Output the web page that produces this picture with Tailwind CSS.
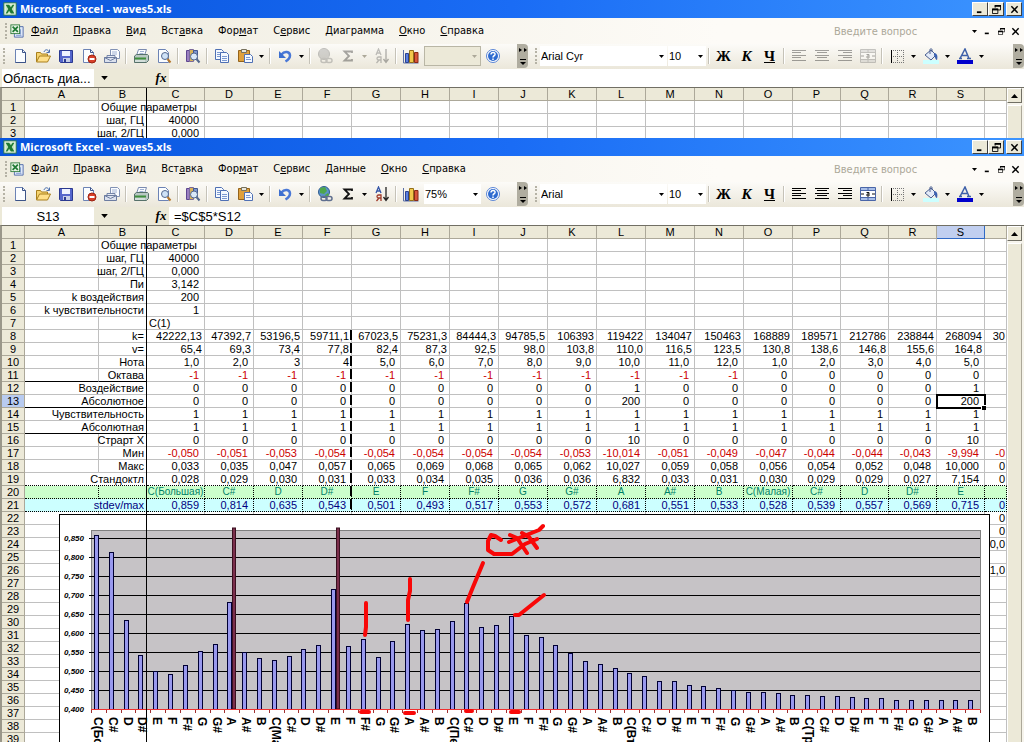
<!DOCTYPE html>
<html lang="ru">
  <head>
    <meta charset="UTF-8" />
    <meta name="viewport" content="width=device-width, initial-scale=1.0" />
    <title>Microsoft Excel - waves5.xls</title>
    <script src="https://cdn.jsdelivr.net/npm/@tailwindcss/browser@4"></script>
  </head>
  <body class="flex h-screen flex-col overflow-hidden bg-[#ece9d8] font-['Liberation_Sans',Arial,sans-serif] text-[11px] text-black">
    <!-- icons -->
    <svg class="hidden">
      <symbol id="i-excel" viewBox="0 0 16 16">
        <rect x="1" y="1" width="14" height="14" fill="#e9f5e6" stroke="#2d7a3a" />
        <path d="M3 3h10v10H3z" fill="#c5e4c2" />
        <path d="M3 3h4l2 3 2-3h2l-3 5 3 5h-4l-2-3-2 3H3l3-5z" fill="#1f7a33" />
      </symbol>
      <symbol id="i-book" viewBox="0 0 16 16">
        <path d="M5 3h10v12H5z" fill="#dfe8f8" stroke="#4a66a8" />
        <path d="M12 6v6M7 13h6" stroke="#7b96cf" />
        <rect x="1" y="1" width="10" height="10" fill="#e9f5e6" stroke="#2d7a3a" />
        <path d="M3 3l6 6M9 3L3 9" stroke="#1f7a33" stroke-width="2" />
      </symbol>
      <symbol id="i-new" viewBox="0 0 16 16">
        <path d="M3.500 1.500h7l3 3v10h-10z" fill="#fbfdff" stroke="#6c83b5" />
        <path d="M10.500 1.500v3h3M13.500 4.500v10h-10" fill="none" stroke="#3c5488" />
      </symbol>
      <symbol id="i-open" viewBox="0 0 16 16">
        <path d="M1.500 13.500v-9h4l1 1.500h6v2" fill="#f6d470" stroke="#a87f1c" />
        <path d="M1.500 14l3-6h11l-3 6z" fill="#ffe08a" stroke="#a87f1c" />
        <path d="M9 4c1-3 4-3 5 0M14.500 1.500v3h-3" fill="none" stroke="#4a6fae" />
      </symbol>
      <symbol id="i-save" viewBox="0 0 16 16">
        <path d="M1.500 2.500h13v12h-12l-1-1z" fill="#5566cc" stroke="#2b3990" />
        <path d="M4 3h8v5H4z" fill="#eef2ff" />
        <path d="M5 10h7v4H5z" fill="#c7cfe8" />
        <path d="M6 11h2v3H6z" fill="#2b3990" />
      </symbol>
      <symbol id="i-perm" viewBox="0 0 16 16">
        <path d="M2.500 1.500h7l3 3v10h-10z" fill="#fbfdff" stroke="#6c83b5" />
        <path d="M9.500 1.500v3h3" fill="none" stroke="#3c5488" />
        <circle cx="11" cy="11" r="4" fill="#d8402a" stroke="#9c2412" />
        <path d="M8.500 11h5" stroke="#fff" stroke-width="2" />
      </symbol>
      <symbol id="i-mail" viewBox="0 0 16 16">
        <path d="M6.500 1.500h7l2 2v7h-9z" fill="#fafcff" stroke="#8292b5" />
        <path d="M8 4h5M8 6h5" stroke="#9fb0d2" />
        <path d="M3 7.500h8v3H3z" fill="#e6ebf5" stroke="#7484a8" />
        <path d="M.5 9.500h12v5H.5z" fill="#dbe1ee" stroke="#6c7ca0" />
        <path d="M.5 9.500l6 3 6-3" fill="none" stroke="#6c7ca0" />
      </symbol>
      <symbol id="i-print" viewBox="0 0 16 16">
        <path d="M5.500 1.500h8l-2 6h-8z" fill="#fafcff" stroke="#7b8bb0" />
        <path d="M7 3.500h4M6.500 5.500h4" stroke="#9fb0d2" />
        <path d="M1.500 8l2-1.500h11l1 1v5l-2 2h-12z" fill="#b9c8c4" stroke="#56716a" />
        <path d="M2 10.500h11" stroke="#3f8f3c" stroke-width="2" />
        <path d="M2 13h10" stroke="#eef4f2" />
      </symbol>
      <symbol id="i-preview" viewBox="0 0 16 16">
        <path d="M2.500 1.500h7l3 3v10h-10z" fill="#fbfdff" stroke="#6c83b5" />
        <circle cx="9" cy="8" r="3.500" fill="#cfe2f7" stroke="#54688e" />
        <path d="M11.500 11l3 3.500" stroke="#b5762a" stroke-width="2" />
      </symbol>
      <symbol id="i-research" viewBox="0 0 16 16">
        <path d="M1.500 2.500h3v11h-3z" fill="#9a7fc0" stroke="#5e4690" />
        <path d="M4.500 1.500h4v12h-4z" fill="#d8b25a" stroke="#7b6a9c" />
        <path d="M8.500 2.500h4v8h-4z" fill="#7f97cf" stroke="#44598f" />
        <circle cx="9" cy="8.500" r="3.500" fill="#d9e8f8" stroke="#54688e" />
        <path d="M11.500 11l3 3.500" stroke="#54688e" stroke-width="2" />
      </symbol>
      <symbol id="i-copy" viewBox="0 0 16 16">
        <path d="M1.500 1.500h6l2 2v8h-8z" fill="#f5f9ff" stroke="#4f70b4" />
        <path d="M3 4.500h4M3 6.500h4M3 8.500h3" stroke="#7b99d2" />
        <path d="M6.500 4.500h6l2 2v8h-8z" fill="#f5f9ff" stroke="#4f70b4" />
        <path d="M8 8.500h5M8 10.500h5M8 12.500h5" stroke="#7b99d2" />
      </symbol>
      <symbol id="i-paste" viewBox="0 0 16 16">
        <path d="M1.500 2.500h11v11h-11z" fill="#dfa03c" stroke="#94631a" />
        <path d="M4.500 1.500h5v3h-5z" fill="#e8e6dc" stroke="#77715c" />
        <path d="M7.500 6.500h6l2 2v6h-8z" fill="#f5f9ff" stroke="#4f70b4" />
        <path d="M9 9.500h4M9 11.500h5" stroke="#7b99d2" />
      </symbol>
      <symbol id="i-undo" viewBox="0 0 16 16">
        <path d="M4.500 6.500c3-4 8.500-3 8.500 1 0 3-2 4.500-4.500 6" fill="none" stroke="#4a78d6" stroke-width="2.500" />
        <path d="M2 3v7h7z" fill="#3d6fd0" />
      </symbol>
      <symbol id="i-link" viewBox="0 0 16 16">
        <circle cx="7" cy="6" r="5.500" fill="#5a93c9" stroke="#2f5c8f" />
        <path d="M3 2l5-1 2 4-3 3-4-1zM8 9l3-2 1 2-3 2z" fill="#4ea64b" />
        <rect x="4" y="10.500" width="6" height="4" rx="2" fill="none" stroke="#5f6f8f" stroke-width="1.500" />
        <rect x="9" y="10.500" width="6" height="4" rx="2" fill="none" stroke="#5f6f8f" stroke-width="1.500" />
      </symbol>
      <symbol id="i-sum" viewBox="0 0 16 16">
        <path d="M12 5V3.500H4.500L9 8l-4.500 4.500H12V11" fill="none" stroke="#111" stroke-width="1.800" />
      </symbol>
      <symbol id="i-sort" viewBox="0 0 16 16">
        <path d="M2 7l2.500-6L7 7M3 5h3" fill="none" stroke="#3455a8" stroke-width="1.300" />
        <path d="M7 15V9H4.500a1.500 1.500 0 000 3H7M5 12l-2.500 3" fill="none" stroke="#a03a2a" stroke-width="1.300" />
        <path d="M12 1v12M9.500 11l2.500 3.500 2.500-3.500" fill="none" stroke="#222" stroke-width="1.300" />
      </symbol>
      <symbol id="i-chart" viewBox="0 0 16 16">
        <path d="M.5 2v13h15" fill="none" stroke="#5a6fa8" />
        <path d="M2.500 5.500h3v9h-3z" fill="#5b7fe0" stroke="#2c438f" />
        <path d="M6.500 2.500h4v12h-4z" fill="#f2c84c" stroke="#94701a" />
        <path d="M11.500 4.500h3.500v10h-3.500z" fill="#d8553a" stroke="#8a2a16" />
      </symbol>
      <symbol id="i-help" viewBox="0 0 16 16">
        <circle cx="8" cy="8" r="6.500" fill="#fff" stroke="#5b86d6" />
        <circle cx="8" cy="8" r="5" fill="#2f6bd0" />
        <path d="M6 6.500c0-3 4.500-2.500 4 0C9.500 8 8 8 8 9.500M8 10.500v1.500" fill="none" stroke="#fff" stroke-width="1.500" />
      </symbol>
      <symbol id="i-left" viewBox="0 0 16 16"><path d="M1 2.500h14M1 4.500h9M1 7.500h14M1 9.500h9M1 12.500h14" stroke="#000" /></symbol>
      <symbol id="i-center" viewBox="0 0 16 16"><path d="M1 2.500h14M3 4.500h10M1 7.500h14M3 9.500h10M1 12.500h14" stroke="#000" /></symbol>
      <symbol id="i-right" viewBox="0 0 16 16"><path d="M1 2.500h14M6 4.500h9M1 7.500h14M6 9.500h9M1 12.500h14" stroke="#000" /></symbol>
      <symbol id="i-merge" viewBox="0 0 16 16">
        <path d="M.5 1.500h15v13H.5z" fill="#a9bfe8" stroke="#4a66a8" />
        <path d="M1 5h14v6H1z" fill="#fff" />
        <path d="M.5 4.500h15M.5 11.500h15M8 1.500v3M8 11.500v3" stroke="#4a66a8" />
        <path d="M1 8h3M12 8h3M6.500 6.500h2.500v3.500H7V8h2" fill="none" stroke="#111" />
      </symbol>
      <symbol id="i-border" viewBox="0 0 16 16">
        <path d="M2.500 2v13" stroke="#000" />
        <path d="M4 2.500h11M4 8.500h11M4 14.500h11M8.500 2v13M14.500 2v13" stroke="#777" stroke-dasharray="1 1" />
      </symbol>
      <symbol id="i-fill" viewBox="0 0 16 16">
        <path d="M0 12h16v4H0z" fill="#ccffff" />
        <path d="M2 7l6-5 5 5-5 5z" fill="#e4ebf8" stroke="#4a5f90" />
        <path d="M7 6V1.500c0-1 2-1 2 0V4" fill="none" stroke="#4a5f90" />
        <path d="M11 5c3 0 4 3 3 7-1 0-2-2-3-5z" fill="#3d62b0" />
      </symbol>
      <symbol id="i-color" viewBox="0 0 16 16">
        <path d="M0 12h16v4H0z" fill="#0000cc" />
        <path d="M3 10.500L8 1l4 9.500M5 7.500h5M2 10.500h3M10 10.500h4" fill="none" stroke="#3d5fa8" stroke-width="1.500" />
      </symbol>
      <symbol id="i-down" viewBox="0 0 5 3"><path d="M0 0h5L2.500 3z" fill="currentColor" /></symbol>
      <symbol id="i-up" viewBox="0 0 7 4"><path d="M0 4h7L3.500 0z" /></symbol>
      <symbol id="i-more" viewBox="0 0 11 24">
        <path d="M2 4l3 2-3 2zM7 4l3 2-3 2z" />
        <path d="M3 15.500h6" stroke="#000" />
        <path d="M3 18h6l-3 3z" />
      </symbol>
      <symbol id="i-min" viewBox="0 0 10 10"><path d="M1 8h5" stroke="#000" stroke-width="2" /></symbol>
      <symbol id="i-restore" viewBox="0 0 10 10">
        <path d="M3.500 3V.5h6v5H7" fill="none" stroke="#000" />
        <path d="M3 1h7" stroke="#000" stroke-width="2" />
        <path d="M.5 4.500h6v5h-6z" fill="none" stroke="#000" />
        <path d="M0 5h7" stroke="#000" stroke-width="2" />
      </symbol>
      <symbol id="i-close" viewBox="0 0 10 10"><path d="M1.500 1.500l7 7M8.500 1.500l-7 7" stroke="#000" stroke-width="1.600" /></symbol>
    </svg>

    <main id="app" class="flex min-h-0 flex-1 flex-col"></main>

    <script>
      const icon = (name, cls = "size-4") => `<svg class="${cls}"><use href="#i-${name}" /></svg>`;
      const repeat = (n, value) => Array(n).fill(value);

      // toolbar parts
      const tool = (name, label, off = false) =>
        `<button aria-label="${label}" ${off ? "disabled" : ""} class="flex h-6 w-[23px] shrink-0 items-center justify-center ${off ? "opacity-35 grayscale" : ""}">${icon(name)}</button>`;
      const drop = (label, off = false) =>
        `<button aria-label="${label}" class="flex h-6 w-[11px] shrink-0 items-center justify-center ${off ? "text-[#aca899]" : ""}">${icon("down", "h-[3px] w-[5px]")}</button>`;
      const sep = `<span class="mx-[2px] h-4 w-[2px] shrink-0 border-r border-white bg-[#c5c2b8]"></span>`;
      const grip = `<span class="mx-[3px] h-4 w-[2px] shrink-0 border-l-2 border-dotted border-[#b5b2a5]"></span>`;
      const more = `<button aria-label="Параметры панелей" class="h-6 w-[11px] shrink-0 rounded-r-sm bg-[#b0ada0]">${icon("more", "h-6 w-[11px]")}</button>`;
      const letter = (text, label, cls) =>
        `<button aria-label="${label}" class="flex h-6 w-[23px] shrink-0 items-center justify-center font-['Liberation_Serif',serif] text-[15px] font-bold ${cls}">${text}</button>`;
      const combo = (value, label, width, off = false) => `
        <span class="relative h-5 shrink-0 ${width} ${off ? "border border-[#b9b6a5] bg-[#ece9d8]" : "bg-white"}">
          <select aria-label="${label}" ${off ? "disabled" : ""} class="h-full w-full appearance-none bg-transparent pl-px text-[11px] outline-none"><option>${value}</option></select>
          <span class="pointer-events-none absolute inset-y-0 right-0 flex w-3 items-center justify-center ${off ? "text-[#aca899]" : ""}">${icon("down", "h-[3px] w-[5px]")}</span>
        </span>`;

      // columns
      const letters = "ABCDEFGHIJKLMNOPQRS".split("");
      const colWidths = [
        "w-[23px]", "w-[74px]", "w-[48px]", "w-[58px]",
        ...repeat(12, "w-[49px]"), ...repeat(4, "w-[48px]"),
      ];

      // rows: label for A:B, values for C..T
      const notes = "C C# D D# E F F# G G# A A# B".split(" ");
      const rows = {
        1: { title: "Общие параметры" },
        2: { label: "шаг, ГЦ", values: ["40000"] },
        3: { label: "шаг, 2/ГЦ", values: ["0,000"] },
        4: { label: "Пи", values: ["3,142"] },
        5: { label: "k воздействия", wide: true, values: ["200"] },
        6: { label: "k чувствительности", wide: true, values: ["1"] },
        7: { values: ["C(1)"], align: "justify-start pl-0.5" },
        8: { label: "k=", tight: true, values: "42222,13 47392,7 53196,5 59711,1 67023,5 75231,3 84444,3 94785,5 106393 119422 134047 150463 168889 189571 212786 238844 268094 30".split(" ") },
        9: { label: "v=", tight: true, values: "65,4 69,3 73,4 77,8 82,4 87,3 92,5 98,0 103,8 110,0 116,5 123,5 130,8 138,6 146,8 155,6 164,8".split(" ") },
        10: { label: "Нота", values: "1,0 2,0 3 4 5,0 6,0 7,0 8,0 9,0 10,0 11,0 12,0 1,0 2,0 3,0 4,0 5,0".split(" ") },
        11: { label: "Октава", line: true, values: [...repeat(12, "-1"), ...repeat(5, "0")] },
        12: { label: "Воздействие", wide: true, values: [...repeat(9, "0"), "1", ...repeat(6, "0"), "1"] },
        13: { label: "Абсолютное", wide: true, line: true, values: [...repeat(9, "0"), "200", ...repeat(6, "0"), "200"] },
        14: { label: "Чувствительность", wide: true, values: repeat(17, "1") },
        15: { label: "Абсолютная", wide: true, line: true, values: repeat(17, "1") },
        16: { label: "Страрт X", values: [...repeat(9, "0"), "10", ...repeat(6, "0"), "10"] },
        17: { label: "Мин", values: "-0,050 -0,051 -0,053 -0,054 -0,054 -0,054 -0,054 -0,054 -0,053 -10,014 -0,051 -0,049 -0,047 -0,044 -0,044 -0,043 -9,994 -0".split(" ") },
        18: { label: "Макс", values: "0,033 0,035 0,047 0,057 0,065 0,069 0,068 0,065 0,062 10,027 0,059 0,058 0,056 0,054 0,052 0,048 10,000 0".split(" ") },
        19: { label: "Стандоктл", wide: true, values: "0,028 0,029 0,030 0,031 0,033 0,034 0,035 0,036 0,036 6,832 0,033 0,031 0,030 0,029 0,029 0,027 7,154 0".split(" ") },
        20: { values: ["C(Большая)", ...notes.slice(1), "C(Малая)", ...notes.slice(1, 5)], align: "justify-center text-[10px]", band: "bg-[#ccffcc] text-[#008066]" },
        21: { label: "stdev/max", wide: true, values: "0,859 0,814 0,635 0,543 0,501 0,493 0,517 0,553 0,572 0,681 0,551 0,533 0,528 0,539 0,557 0,569 0,715 0".split(" "), band: "bg-[#ccffff] text-[#000080]" },
        22: { last: "0" },
        23: { last: "0" },
        24: { last: "0,0" },
        26: { last: "1,0" },
      };

      function cell(text, { align = "justify-end", pad = "", border = "border-[#c0c0c0]", extra = "", span = 1 } = {}) {
        const color = String(text).startsWith("-") ? "text-[#cc0000]" : "";
        return `<td colspan="${span}" class="h-[13px] border-r border-b p-0 leading-3 ${border} ${extra}"><div class="flex h-3 whitespace-nowrap ${align} ${pad} ${color}">${text}</div></td>`;
      }

      function gridRow(n, active) {
        const row = rows[n] || {};
        const values = row.values || [];
        const dotted = row.band ? "border-dotted border-black" : n === 19 ? "border-[#c0c0c0] border-b-black [border-bottom-style:dotted]" : "border-[#c0c0c0]";
        const labelBorder = row.line ? "border-[#c0c0c0] border-b-black" : dotted;
        let html = `<th scope="row" class="h-[13px] border-r border-b border-[#aca899] p-0 text-center leading-3 font-normal text-black ${active && n === 13 ? "bg-[#b8cbf0]" : "bg-[#ece9d8]"}">${n}</th>`;
        if (row.wide) {
          html += cell(row.label, { span: 2, pad: "pr-0.5", border: labelBorder });
        } else {
          html += cell("", { border: labelBorder });
          html += row.title
            ? cell(row.title, { align: "justify-start pl-0.5", border: labelBorder })
            : cell(row.label || "", { pad: "pr-0.5", border: labelBorder });
        }
        for (let i = 0; i < 18; i++) {
          const text = i === 17 && row.last ? row.last : values[i] || "";
          const tight = row.tight || (n === 10 && (i === 2 || i === 3));
          const pad = row.align ? "" : i === 17 ? "pr-px" : tight ? "pr-0.5" : "pr-[5px]";
          const selected = active && n === 13 && i === 16;
          html += cell(text, {
            align: row.align || "justify-end",
            pad,
            border: dotted,
            extra: selected ? "relative outline-2 -outline-offset-1 outline-black after:absolute after:-right-[2px] after:-bottom-[3px] after:size-[5px] after:border-t after:border-l after:border-white after:bg-black" : "",
          });
        }
        return `<tr class="${row.band || ""}">${html}</tr>`;
      }

      function grid(count, active) {
        const head = [...letters, ""]
          .map((l) => `<th scope="col" class="h-[13px] border-r border-b p-0 text-center leading-3 font-normal ${active && l === "S" ? "border-[#316ac5] bg-[#c1cff0]" : "border-[#aca899]"}">${l}</th>`)
          .join("");
        let body = "";
        for (let n = 1; n <= count; n++) body += gridRow(n, active);
        return `
          <table class="w-full table-fixed border-separate border-spacing-0 bg-white">
            <colgroup>${colWidths.map((w) => `<col class="${w}" />`).join("")}<col /></colgroup>
            <thead><tr class="bg-[#ece9d8]"><th class="h-[13px] border-r border-b border-[#aca899] p-0"></th>${head}</tr></thead>
            <tbody>${body}</tbody>
          </table>`;
      }

      // chart
      const levels = [
        0.859, 0.814, 0.635, 0.543, 0.501, 0.493, 0.517, 0.553, 0.572, 0.681, 0.551, 0.533,
        0.528, 0.539, 0.557, 0.569, 0.715, 0.565, 0.583, 0.536, 0.578, 0.623, 0.607, 0.61,
        0.631, 0.678, 0.615, 0.62, 0.644, 0.594, 0.589, 0.568, 0.547, 0.526, 0.518, 0.507,
        0.494, 0.486, 0.473, 0.473, 0.462, 0.46, 0.455, 0.449, 0.444, 0.444, 0.441, 0.436,
        0.436, 0.433, 0.433, 0.431, 0.428, 0.428, 0.425, 0.425, 0.425, 0.425, 0.423, 0.425,
      ];
      const octaves = ["C(Большая)", "C(Малая)", "C(Первая)", "C(Вторая)", "C(Третья)"];

      function chart() {
        const left = 32, right = 921, top = 16, base = 195, step = (right - left) / 60;
        let svg = `<rect x="${left}.5" y="${top}.5" width="${right - left}" height="${base - top}" fill="#c6c3c6" stroke="#808080" />`;
        for (let i = 0; i < 10; i++) {
          const y = base - i * 19;
          if (i) svg += `<path d="M${left - 2} ${y + 0.5}H${right}" stroke="#000" />`;
          svg += `<text x="25" y="${y + 3}" text-anchor="end" class="text-[8px] font-bold italic">${(0.4 + i * 0.05).toFixed(3).replace(".", ",")}</text>`;
        }
        levels.forEach((v, i) => {
          const x = Math.round(left + i * step + 3);
          const h = Math.round((v - 0.4) * 380);
          svg += `<rect x="${x}.5" y="${base - h}.5" width="4" height="${h}" fill="#9999ee" stroke="#000033" />`;
          if (i === 9 || i === 16) svg += `<rect x="${x + 5}.5" y="14" width="3" height="${base - 14}" fill="#7a2f4c" stroke="#3a1020" />`;
          const label = i % 12 ? notes[i % 12] : octaves[i / 12];
          svg += `<text transform="translate(${x} 203) rotate(90)" class="text-[12px] font-bold">${label}</text>`;
        });
        svg += `<path d="M${left} ${base}.5H${right}" stroke="#f03030" />`;
        for (let i = 0; i <= 60; i++) svg += `<path d="M${Math.round(left + i * step)}.5 196v3" stroke="#a03030" />`;
        // hand-drawn marks
        svg += `
          <g fill="none" stroke="#f80808" stroke-width="4" stroke-linecap="round" stroke-linejoin="round">
            <path d="M307 89v24l-1 8" />
            <path d="M351 65v12l-2 9v20" />
            <path d="M424 49l-10 24-6 15" />
            <path d="M442 26l-6-4-4-1-3 6v9l6 4h18l13-10 12-5" />
            <path d="M450 28l20-8 10-4 4-4" />
            <path d="M451 21l7 3 10 15M463 19l7 4 8 11" />
            <path d="M456 101h4l25-20" />
            <path d="M302 198h8M346 199h9M407 197h6M452 198h8" />
          </g>`;
        return `
          <figure aria-label="stdev/max" class="absolute top-[288px] left-[59px] h-[245px] w-[931px] border border-black bg-white">
            <svg viewBox="1 1 929 243" class="h-full w-full">${svg}</svg>
          </figure>
          <svg class="absolute top-[104px] left-[350px] h-[182px] w-[2px]"><path d="M1 0v182" stroke="#000" stroke-width="2" stroke-dasharray="10 3" /></svg>`;
      }

      function excel({ cls, menu, active, name, nameAlign, formula, font, zoom, count }) {
        const off = !active;
        const winBtn = (i, label, ml = "") =>
          `<button aria-label="${label}" class="flex h-[14px] w-4 items-center justify-center border border-t-white border-r-[#404040] border-b-[#404040] border-l-white bg-[#ece9d8] ${ml}">${icon(i, "size-[9px]")}</button>`;
        return `
          <section class="flex flex-col overflow-hidden ${cls}">
            <header class="flex h-[18px] shrink-0 items-center bg-linear-to-r from-[#0855dd] via-[#1a6cf5] to-[#3c94ff] pr-[2px] pl-[3px]">
              ${icon("excel", "size-[14px]")}
              <h1 class="ml-[3px] flex-1 font-['Open_Sans','Noto_Sans',sans-serif] text-[11px] font-bold whitespace-nowrap text-white">Microsoft Excel - waves5.xls</h1>
              ${winBtn("min", "Свернуть")}${winBtn("restore", "Восстановить")}${winBtn("close", "Закрыть", "ml-[2px]")}
            </header>
            <nav class="flex h-[26px] shrink-0 items-center bg-linear-to-r from-[#efecdf] to-[#fdfbf7] to-70% pl-[2px] font-['DejaVu_Sans_Condensed','DejaVu_Sans',sans-serif] text-[11px]">
              ${grip}${icon("book", "size-[14px]")}
              <div class="ml-[7px] flex gap-[15px]">${menu.map((m) => `<a href="#">${m}</a>`).join("")}</div>
              <input aria-label="Введите вопрос" placeholder="Введите вопрос" class="mr-[3px] ml-auto h-5 w-[133px] bg-transparent pl-px outline-none placeholder:text-[#aca899]" />
              ${drop("Вопросы")}
              <div class="flex items-center gap-[6px] pr-1 pl-1">
                <button aria-label="Свернуть книгу">${icon("min", "size-2")}</button>
                <button aria-label="Восстановить книгу">${icon("restore", "size-[7px]")}</button>
                <button aria-label="Закрыть книгу">${icon("close", "size-[9px]")}</button>
              </div>
            </nav>
            <div class="flex h-[25px] shrink-0 items-center bg-linear-to-b from-[#fcfbf8] to-[#ebe7da] pb-px">
              <span class="flex items-center rounded-r">
                ${grip}
                ${tool("new", "Создать")}${tool("open", "Открыть")}${tool("save", "Сохранить")}${tool("perm", "Разрешения")}${tool("mail", "Сообщение")}
                ${sep}${tool("print", "Печать")}${tool("preview", "Просмотр")}
                ${sep}${tool("research", "Справочные материалы")}
                ${sep}${tool("copy", "Копировать")}${tool("paste", "Вставить")}${drop("Варианты вставки")}
                ${sep}${tool("undo", "Отменить")}${drop("Список отмены")}
                ${sep}${tool("link", "Гиперссылка", off)}${tool("sum", "Автосумма", off)}${drop("Функции", off)}${tool("sort", "Сортировка", off)}
                ${sep}${tool("chart", "Мастер диаграмм")}
                <span class="w-[2px]"></span>
                ${combo(zoom, "Масштаб", "w-[57px]", off)}
                ${tool("help", "Справка")}
              </span>
              <span class="w-[13px] shrink-0"></span>
              ${more}
              <span class="w-1 shrink-0"></span>${grip}
              ${combo(font, "Шрифт", "w-[127px]")}
              <span class="w-[1px] shrink-0"></span>
              ${combo("10", "Размер", "w-[38px]")}
              ${sep}
              ${letter("Ж", "Полужирный", "")}${letter("К", "Курсив", "italic")}${letter("Ч", "Подчёркнутый", "underline")}
              ${sep}${tool("left", "По левому краю", off)}${tool("center", "По центру", off)}${tool("right", "По правому краю", off)}${tool("merge", "Объединить", off)}
              ${sep}${tool("border", "Границы")}${drop("Виды границ")}${tool("fill", "Заливка")}${drop("Цвет заливки")}${tool("color", "Цвет шрифта")}${drop("Цвета шрифта")}
              <span class="ml-auto flex">${more}</span>
            </div>
            <div class="flex h-[18px] shrink-0 items-center pl-[2px] text-[13px]">
              <input aria-label="Имя" value="${name}" class="h-full w-[92px] bg-white outline-none ${nameAlign}" />
              <button aria-label="Список имён" class="flex w-5 justify-center">${icon("down", "h-1 w-[7px]")}</button>
              <button aria-label="Вставка функции" class="ml-[39px] w-4 font-['Liberation_Serif',serif] text-[13px] leading-4 font-bold italic">fx</button>
              <input aria-label="Строка формул" value="${formula}" class="h-full min-w-0 flex-1 bg-white pl-[5px] outline-none" />
            </div>
            <div class="relative flex min-h-0 flex-1 overflow-hidden border-t border-l-2 border-[#716f64] border-l-[#9a978a]">
              <div class="min-w-0 flex-1">${grid(count, active)}</div>
              <div class="flex w-[17px] shrink-0 flex-col bg-[#f6f4ec] pr-[2px]">
                <button aria-label="Вверх" class="flex h-[15px] shrink-0 items-center justify-center border border-t-white border-r-[#716f64] border-b-[#716f64] border-l-white bg-[#ece9d8]">${icon("up", "h-1 w-[7px]")}</button>
                <div class="mt-[2px] flex-1 border border-t-white border-r-[#aca899] border-b-0 border-l-white bg-[#ece9d8]"></div>
              </div>
              <div class="pointer-events-none absolute inset-0 -left-[2px] overflow-hidden">
                ${active ? chart() : ""}
                <div class="absolute inset-y-0 left-[146px] w-px bg-black"></div>
              </div>
            </div>
          </section>`;
      }

      const u = (s) => s.replace(/_(.)/, "<u>$1</u>");
      const common = ["_Файл", "_Правка", "_Вид", "Вст_авка", "Фор_мат", "С_ервис"];
      document.getElementById("app").innerHTML =
        excel({
          cls: "h-[138px] shrink-0", menu: [...common, "_Диаграмма", "_Окно", "_Справка"].map(u), active: false,
          name: "Область диа...", nameAlign: "pl-px", formula: "", font: "Arial Cyr", zoom: "", count: 3,
        }) +
        excel({
          cls: "min-h-0 flex-1", menu: [...common, "_Данные", "_Окно", "_Справка"].map(u), active: true,
          name: "S13", nameAlign: "text-center", formula: "=$C$5*S12", font: "Arial", zoom: "75%", count: 39,
        });
    </script>
  </body>
</html>
